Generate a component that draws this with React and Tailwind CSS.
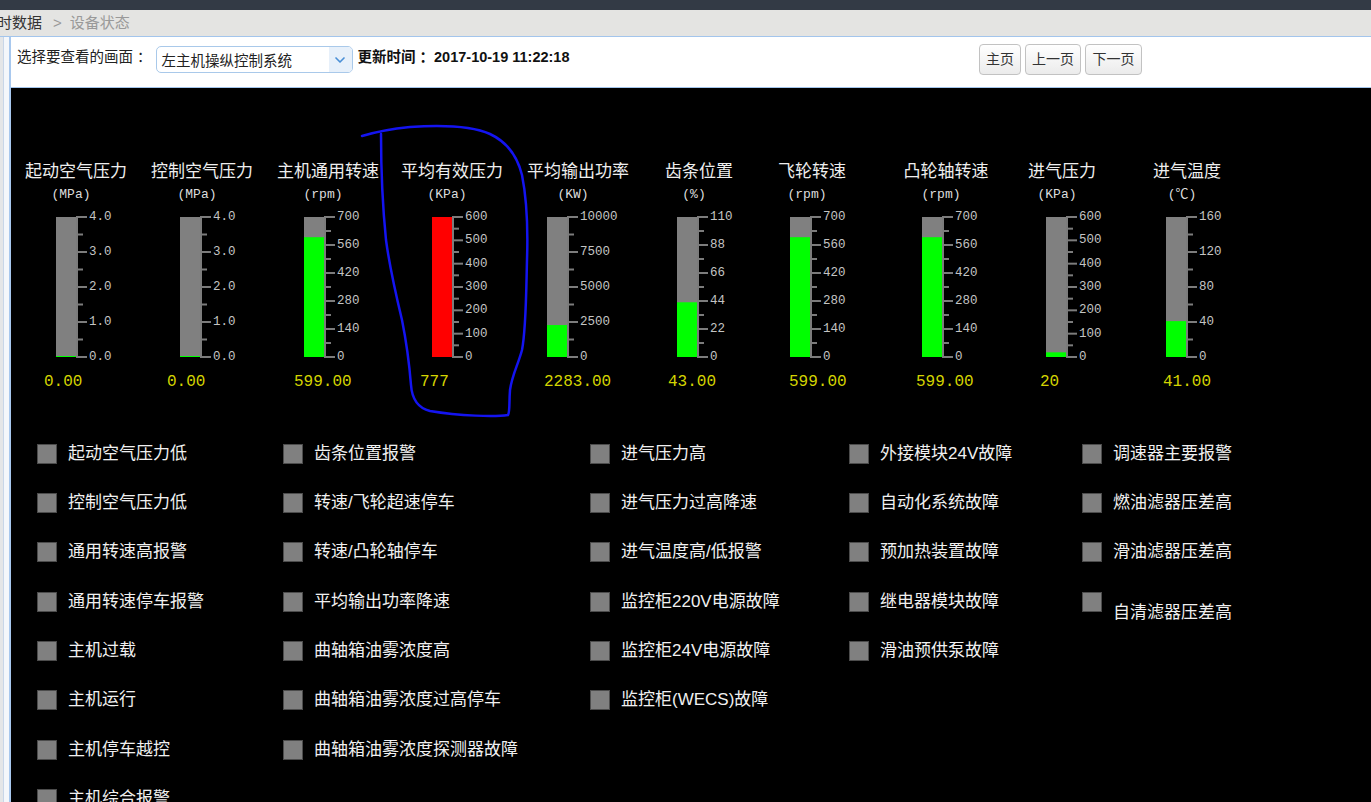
import { ChevronDown } from 'lucide-react'

const CJK = "font-['Liberation_Sans','Noto_Sans_CJK_SC',sans-serif]"
const MONO = "font-['Liberation_Mono','Noto_Sans_CJK_SC',monospace]"

const gauges = [
  { title: '起动空气压力', unit: '(MPa)', labels: ['4.0', '3.0', '2.0', '1.0', '0.0'], max: 4, value: 0, text: '0.00', ml: 'ml-[10px]', barPl: 'pl-[35px]', valPl: 'pl-[23px]' },
  { title: '控制空气压力', unit: '(MPa)', labels: ['4.0', '3.0', '2.0', '1.0', '0.0'], max: 4, value: 0, text: '0.00', ml: 'ml-[16px]', barPl: 'pl-[33px]', valPl: 'pl-[20px]' },
  { title: '主机通用转速', unit: '(rpm)', labels: ['700', '560', '420', '280', '140', '0'], max: 700, value: 599, text: '599.00', ml: 'ml-[16px]', barPl: 'pl-[31px]', valPl: 'pl-[21px]' },
  { title: '平均有效压力', unit: '(KPa)', labels: ['600', '500', '400', '300', '200', '100', '0'], max: 600, value: 777, text: '777', ml: 'ml-[14px]', barPl: 'pl-[35px]', valPl: 'pl-[23px]' },
  { title: '平均输出功率', unit: '(KW)', labels: ['10000', '7500', '5000', '2500', '0'], max: 10000, value: 2283, text: '2283.00', ml: 'ml-[16px]', barPl: 'pl-[24px]', valPl: 'pl-[21px]' },
  { title: '齿条位置', unit: '(%)', labels: ['110', '88', '66', '44', '22', '0'], max: 110, value: 43, text: '43.00', ml: 'ml-[11px]', barPl: 'pl-[33px]', valPl: 'pl-[24px]' },
  { title: '飞轮转速', unit: '(rpm)', labels: ['700', '560', '420', '280', '140', '0'], max: 700, value: 599, text: '599.00', ml: 'ml-[3px]', barPl: 'pl-[33px]', valPl: 'pl-[32px]' },
  { title: '凸轮轴转速', unit: '(rpm)', labels: ['700', '560', '420', '280', '140', '0'], max: 700, value: 599, text: '599.00', ml: 'ml-[24px]', barPl: 'pl-[31px]', valPl: 'pl-[25px]' },
  { title: '进气压力', unit: '(KPa)', labels: ['600', '500', '400', '300', '200', '100', '0'], max: 600, value: 20, text: '20', ml: 'ml-[6px]', barPl: 'pl-[39px]', valPl: 'pl-[33px]' },
  { title: '进气温度', unit: '(℃)', labels: ['160', '120', '80', '40', '0'], max: 160, value: 41, text: '41.00', ml: 'ml-[15px]', barPl: 'pl-[34px]', valPl: 'pl-[31px]' },
]

const alarmColumns = [
  { width: 'w-[246px]', items: ['起动空气压力低', '控制空气压力低', '通用转速高报警', '通用转速停车报警', '主机过载', '主机运行', '主机停车越控', '主机综合报警'] },
  { width: 'w-[307px]', items: ['齿条位置报警', '转速/飞轮超速停车', '转速/凸轮轴停车', '平均输出功率降速', '曲轴箱油雾浓度高', '曲轴箱油雾浓度过高停车', '曲轴箱油雾浓度探测器故障'] },
  { width: 'w-[259px]', items: ['进气压力高', '进气压力过高降速', '进气温度高/低报警', '监控柜220V电源故障', '监控柜24V电源故障', '监控柜(WECS)故障'] },
  { width: 'w-[233px]', items: ['外接模块24V故障', '自动化系统故障', '预加热装置故障', '继电器模块故障', '滑油预供泵故障'] },
  { width: 'w-[200px]', items: ['调速器主要报警', '燃油滤器压差高', '滑油滤器压差高', '自清滤器压差高'] },
]

function GaugeScale({ labels, max, value }) {
  const top = 10
  const height = 140
  const step = height / (labels.length - 1)
  const over = value > max
  const fillHeight = Math.max(1, Math.min(height, (value / max) * height))

  return (
    <svg width="80" height="158" className="block">
      <rect x="0" y={top} width="20" height={height} fill="#808080" />
      <rect x="0" y={top + height - fillHeight} width="20" height={fillHeight} fill={over ? '#ff0000' : '#00ff00'} />
      <rect x="20" y={top - 1} width="2" height={height + 2} fill="#7c7c7c" />
      {labels.map((label, i) => {
        const y = top + i * step
        return (
          <g key={label}>
            <rect x="22" y={y - 1} width="9" height="2" fill="#7c7c7c" />
            {i < labels.length - 1 ? (
              <rect x="22" y={y + step / 2 - 1} width="5" height="2" fill="#7c7c7c" />
            ) : null}
            <text
              x="33"
              y={y}
              dominantBaseline="central"
              fontSize="12.5"
              fill="#c4c4c4"
              fontFamily="'Liberation Mono', monospace"
            >
              {label}
            </text>
          </g>
        )
      })}
    </svg>
  )
}

function Gauge({ gauge }) {
  return (
    <div className={`flex w-[110px] flex-none flex-col ${gauge.ml}`}>
      <div className={`h-[24px] whitespace-nowrap pt-[1px] text-center text-[17px] leading-[24px] text-[#eeeeee] ${CJK}`}>
        {gauge.title}
      </div>
      <div className={`h-[24px] pr-[10px] text-center text-[13px] leading-[24px] text-[#dcdcdc] ${MONO}`}>
        {gauge.unit}
      </div>
      <div className={gauge.barPl}>
        <GaugeScale labels={gauge.labels} max={gauge.max} value={gauge.value} />
      </div>
      <div className={`mt-[5px] h-[24px] text-[16px] leading-[24px] text-[#d4d400] ${MONO} ${gauge.valPl}`}>
        {gauge.text}
      </div>
    </div>
  )
}

function AlarmItem({ label }) {
  const lowered = label === '自清滤器压差高'
  return (
    <div className="flex h-[49.33px] items-center">
      <div className="h-[20px] w-[20px] flex-none border border-[#4c4c4c] bg-[#808080]" />
      <span
        className={`ml-[11px] whitespace-nowrap text-[17px] leading-[24px] text-[#f0f0f0] ${CJK} ${
          lowered ? 'mt-[22px]' : ''
        }`}
      >
        {label}
      </span>
    </div>
  )
}

function ToolButton({ children, width }) {
  return (
    <button
      type="button"
      className={`h-[31px] ${width} rounded-[4px] border border-[#c2c2c2] bg-gradient-to-b from-white to-[#ebebeb] text-[14px] text-[#333] ${CJK}`}
    >
      {children}
    </button>
  )
}

export default function App() {
  return (
    <div className={`relative h-[802px] w-full overflow-hidden bg-white ${CJK}`}>
      <div className="h-[10px] bg-[#333a45]" />

      <div className="flex h-[26px] items-center bg-[#e4e4e2] text-[15px]">
        <span className="ml-[-18px] text-[#333]">实时数据</span>
        <span className="ml-[11px] text-[#999]">&gt;</span>
        <span className="ml-[8px] text-[#999]">设备状态</span>
      </div>

      <div className="flex h-[766px] border-t border-[#a3c5ec]">
        <div className="flex w-[11px] flex-none">
          <div className="w-[3px] bg-[#e4e6e8]" />
          <div className="w-[1px] bg-[#c8d6e8]" />
          <div className="flex-1 border-r-2 border-[#a8c8ee] bg-[#f4f7fb]" />
        </div>

        <div className="flex min-w-0 flex-1 flex-col">
          <div className="flex h-[51px] flex-none items-start border-b border-[#a3c5ec] pl-[6px] text-[14.5px]">
            <span className="mt-[10px] leading-[20px] text-[#222]">选择要查看的画面 ：</span>
            <div className="ml-[4px] mt-[9px] flex h-[27px] w-[197px] items-stretch overflow-hidden rounded-[5px] border border-[#a9c9ea] bg-white">
              <span className="flex-1 pl-[5px] pt-[4px] leading-[20px] text-[#222]">左主机操纵控制系统</span>
              <span className="flex w-[23px] items-center justify-center bg-[#e7f0fa]">
                <ChevronDown className="h-[16px] w-[16px] text-[#4a8fd6]" strokeWidth={2.5} />
              </span>
            </div>
            <span className="ml-[5px] mt-[10px] font-bold leading-[20px] text-[#111]">
              更新时间 ：2017-10-19 11:22:18
            </span>
            <div className="ml-auto mr-[229px] mt-[7px] flex gap-[4px]">
              <ToolButton width="w-[42px]">主页</ToolButton>
              <ToolButton width="w-[56px]">上一页</ToolButton>
              <ToolButton width="w-[57px]">下一页</ToolButton>
            </div>
          </div>

          <div className="flex-1 bg-black pt-[71px]">
            <div className="flex">
              {gauges.map((gauge) => (
                <Gauge key={gauge.title + gauge.ml} gauge={gauge} />
              ))}
            </div>

            <div className="mt-[35px] flex pl-[26px]">
              {alarmColumns.map((column, i) => (
                <div key={i} className={`flex flex-none flex-col ${column.width}`}>
                  {column.items.map((label) => (
                    <AlarmItem key={label} label={label} />
                  ))}
                </div>
              ))}
            </div>
          </div>
        </div>
      </div>

      <svg className="pointer-events-none absolute left-0 top-0" width="1371" height="802">
        <path
          d="M362,136 C372,133 390,129 410,127 C440,125 470,125 490,134 C505,141 517,155 522,175 C527,200 528,230 527,260 C526,300 526,330 522,350 C518,365 512,375 510,390 C509,403 510,412 508,415 C495,417 460,416 430,411 C418,408 412,400 411,385 C409,360 406,340 402,320 C396,295 390,270 386,240 C383,210 381,170 381,134"
          fill="none"
          stroke="#1414f0"
          strokeWidth="2.5"
          strokeLinecap="round"
        />
      </svg>
    </div>
  )
}
